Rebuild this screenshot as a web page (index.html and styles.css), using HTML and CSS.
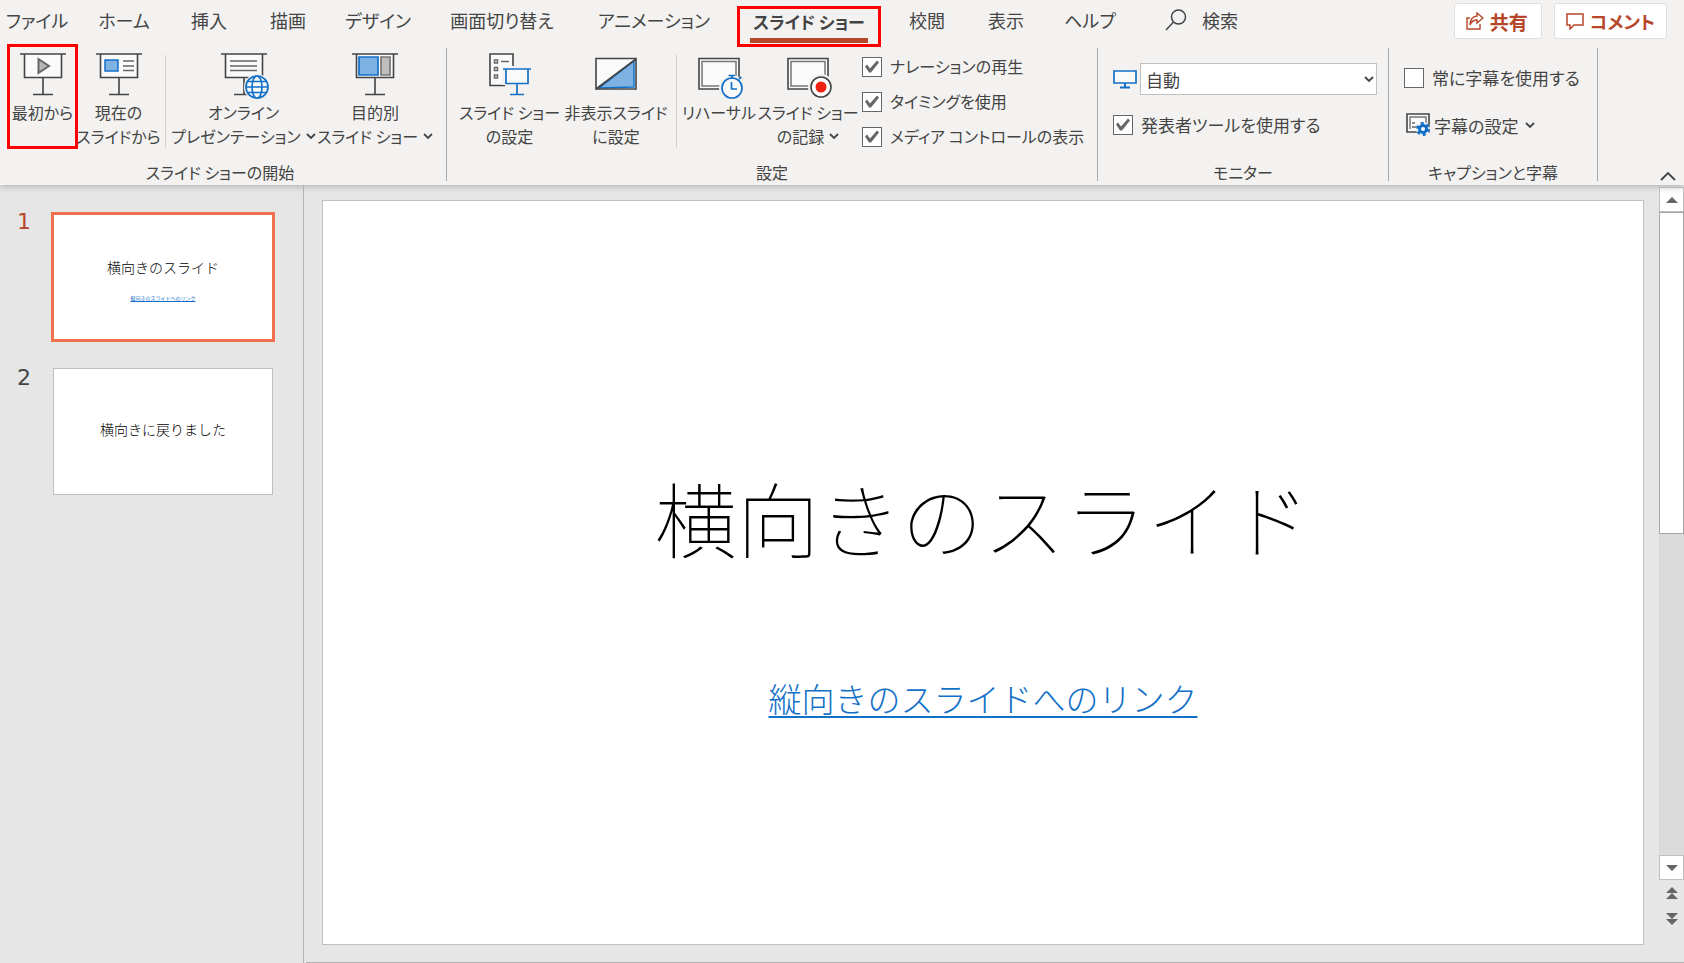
FILE: index.html
```html
<!DOCTYPE html>
<html lang="ja">
<head>
<meta charset="utf-8">
<title>スライド ショー</title>
<link rel="stylesheet" href="styles.css">
</head>
<body>
<svg class="defs" aria-hidden="true">
  <symbol id="easel" viewBox="0 0 50 48"><path d="M6.500 2V25.500H43.500V2" fill="#fafafa" stroke="#444" stroke-width="1.600"/><path d="M2 2H48M25 26V42M15 42.500H35" fill="none" stroke="#444" stroke-width="1.600"/></symbol>
  <symbol id="chev" viewBox="0 0 10 8"><path d="M1 2L5 6L9 2" fill="none" stroke="#444" stroke-width="1.800"/></symbol>
</svg>
<header class="ribbon">
  <div class="topbar">
    <nav class="tabs">
      <button class="tab">ファイル</button><button class="tab">ホーム</button><button class="tab">挿入</button><button class="tab">描画</button><button class="tab">デザイン</button><button class="tab">画面切り替え</button><button class="tab">アニメーション</button><button class="tab active"><span>スライド ショー</span></button><button class="tab">校閲</button><button class="tab">表示</button><button class="tab">ヘルプ</button>
    </nav>
    <button class="search"><svg width="22" height="22" viewBox="0 0 22 22" fill="none" stroke="#444" stroke-width="1.500"><circle cx="13.500" cy="8" r="7"/><path d="M8.500 13L1 21"/></svg>検索</button>
    <div class="actions">
      <button class="action"><svg width="18" height="18" viewBox="0 0 18 18" fill="none" stroke="#b7472a" stroke-width="1.400"><path d="M4 6H1V17H14V12M11 1L17 6L11 11V8Q6 8 4 13Q4 5 11 4Z"/></svg>共有</button>
      <button class="action"><svg width="18" height="18" viewBox="0 0 18 18" fill="none" stroke="#b7472a" stroke-width="1.500"><path d="M1 2H17V13H8L4 17V13H1Z"/></svg>コメント</button>
    </div>
  </div>
  <div class="groups">
    <section class="group start">
      <div class="tools">
        <button class="tool marked"><svg class="icon"><use href="#easel"/><path d="M20.500 7V21L31 14Z" fill="#b8b6b5" stroke="#666" stroke-width="2"/></svg><span>最初から</span></button>
        <button class="tool"><svg class="icon"><use href="#easel"/><path d="M11 8H24V19H11Z" fill="#7db2e3" stroke="#1370c7" stroke-width="1.500"/><path d="M29 9H40M29 14H40M29 18.500H40" stroke="#666" stroke-width="1.500"/></svg><span>現在の</span><span>スライドから</span></button>
        <i class="rule"></i>
        <button class="tool"><svg class="icon"><use href="#easel"/><path d="M11 9H38M11 14H38M11 18.500H38" stroke="#666" stroke-width="1.500"/><circle cx="38" cy="35" r="13" fill="#f3f2f1"/><g fill="#fafafa" stroke="#1370c7" stroke-width="1.700"><circle cx="38" cy="35" r="11"/><ellipse cx="38" cy="35" rx="5" ry="11"/><path d="M27 35H49M29 29.500H47M29 40.500H47"/></g></svg><span>オンライン</span><span class="line">プレゼンテーション<svg class="chev"><use href="#chev"/></svg></span></button>
        <button class="tool"><svg class="icon"><use href="#easel"/><path d="M9 5H28V23H9Z" fill="#7db2e3" stroke="#1370c7" stroke-width="1.700"/><path d="M31 5H40V23H31Z" fill="#c0bfbe" stroke="#777" stroke-width="1.700"/></svg><span>目的別</span><span class="line">スライド ショー<svg class="chev"><use href="#chev"/></svg></span></button>
      </div>
      <h2>スライド ショーの開始</h2>
    </section>
    <section class="group setup">
      <div class="tools">
        <button class="tool"><svg class="icon"><path d="M20 33.500H5V2H28V14" fill="#fafafa" stroke="#444" stroke-width="1.600"/><path d="M9.500 8H12.500V11H9.500ZM9.500 15.500H12.500V18.500H9.500ZM9.500 23H12.500V26H9.500ZM16 9.500H24" fill="none" stroke="#666" stroke-width="1.500"/><path d="M17 15H48V33H17Z" fill="#f3f2f1"/><path d="M21 17H43V31.500H21Z" fill="#fafafa"/><path d="M18 17H46M21 17V31.500H43V17M32 32V42M25 42.500H39" fill="none" stroke="#1370c7" stroke-width="1.700"/></svg><span>スライド ショー</span><span>の設定</span></button>
        <button class="tool"><svg class="icon"><path d="M5 6.500H45V37H5Z" fill="#fafafa"/><path d="M8 36L43 9V35Z" fill="#7db2e3" stroke="#1370c7" stroke-width="1.500"/><path d="M5 6.500H45V37H5Z" fill="none" stroke="#444" stroke-width="1.600"/><path d="M5 37L45 7" stroke="#444" stroke-width="1.600"/></svg><span>非表示スライド</span><span>に設定</span></button>
        <i class="rule"></i>
        <button class="tool"><svg class="icon"><path d="M5 6.500H45V37H5Z" fill="#fafafa" stroke="#444" stroke-width="1.600"/><path d="M8 9.500H42V34H8Z" fill="none" stroke="#777" stroke-width="1.500"/><circle cx="38" cy="36" r="13" fill="#f3f2f1"/><g fill="none" stroke="#1370c7" stroke-width="1.700"><circle cx="38" cy="36" r="10" fill="#fafafa"/><path d="M37.500 30V37H43M34.500 23.500H41M38 24V27M45 27L47.500 25"/></g></svg><span>リハーサル</span></button>
        <button class="tool"><svg class="icon"><path d="M5 6.500H45V37H5Z" fill="#fafafa" stroke="#444" stroke-width="1.600"/><path d="M8 9.500H42V34H8Z" fill="none" stroke="#777" stroke-width="1.500"/><circle cx="38" cy="35" r="13" fill="#f3f2f1"/><circle cx="38" cy="35" r="10" fill="#fff" stroke="#444" stroke-width="1.600"/><circle cx="38" cy="35" r="5.500" fill="#f0220f"/></svg><span>スライド ショー</span><span class="line">の記録<svg class="chev"><use href="#chev"/></svg></span></button>
        <div class="checks">
          <label class="check"><input type="checkbox" checked>ナレーションの再生</label>
          <label class="check"><input type="checkbox" checked>タイミングを使用</label>
          <label class="check"><input type="checkbox" checked>メディア コントロールの表示</label>
        </div>
      </div>
      <h2>設定</h2>
    </section>
    <section class="group monitor">
      <div class="rows">
        <div class="pick"><label for="mon" aria-label="モニター"><svg width="24" height="20" viewBox="0 0 24 20"><path d="M1 2H23V14H1Z" fill="#fafafa" stroke="#1370c7" stroke-width="1.700"/><path d="M12 14V18M7 18.500H17" stroke="#1370c7" stroke-width="2"/></svg></label>
          <div class="combo"><select id="mon"><option>自動</option></select><svg class="chev"><use href="#chev"/></svg></div></div>
        <label class="check"><input type="checkbox" checked>発表者ツールを使用する</label>
      </div>
      <h2>モニター</h2>
    </section>
    <section class="group captions">
      <div class="rows">
        <label class="check"><input type="checkbox">常に字幕を使用する</label>
        <button class="inline"><svg width="25" height="24" viewBox="0 0 25 24"><path d="M1 1H23V19H1Z" fill="#fafafa" stroke="#444" stroke-width="1.600"/><path d="M4 16V4H20V10" fill="none" stroke="#777" stroke-width="1.500"/><path d="M6 10H9M6 14H11" stroke="#666" stroke-width="1.500"/><circle cx="17" cy="16" r="7" fill="#f3f2f1"/><circle cx="17" cy="16" r="3.500" fill="#fff" stroke="#1370c7" stroke-width="3"/><circle cx="17" cy="16" r="5.500" fill="none" stroke="#1370c7" stroke-width="3" stroke-dasharray="2.900 2.860"/></svg><span>字幕の設定</span><svg class="chev"><use href="#chev"/></svg></button>
      </div>
      <h2>キャプションと字幕</h2>
    </section>
    <button class="collapse" aria-label="リボンを折りたたむ"><svg width="16" height="10" viewBox="0 0 16 10"><path d="M1 9L8 2L15 9" fill="none" stroke="#444" stroke-width="1.800"/></svg></button>
  </div>
</header>
<main class="work">
  <aside class="pane">
    <div class="entry current"><b>1</b><button class="thumb"><span>横向きのスライド</span><u>縦向きのスライドへのリンク</u></button></div>
    <div class="entry"><b>2</b><button class="thumb second"><span>横向きに戻りました</span></button></div>
  </aside>
  <div class="stage">
    <article class="slide"><h1>横向きのスライド</h1><a href="#">縦向きのスライドへのリンク</a></article>
    <div class="scroll">
      <button class="arrow" aria-label="上へ"><svg width="12" height="6"><path d="M0 6L6 0L12 6Z"/></svg></button>
      <div class="track"><div class="grip"></div></div>
      <button class="arrow" aria-label="下へ"><svg width="12" height="6"><path d="M0 0L6 6L12 0Z"/></svg></button>
      <button class="jump" aria-label="前のスライド"><svg width="12" height="12"><path d="M0 6L6 0L12 6ZM0 12L6 6L12 12Z"/></svg></button>
      <button class="jump" aria-label="次のスライド"><svg width="12" height="12"><path d="M0 0L6 6L12 0ZM0 6L6 12L12 6Z"/></svg></button>
    </div>
  </div>
</main>
</body>
</html>
```
FILE: styles.css
```css
*, *::before, *::after { box-sizing: border-box; }
body {
  margin: 0;
  min-height: 100vh;
  display: flex;
  flex-direction: column;
  background: #e6e6e6;
  color: #444;
  font: 400 16px/23px "Noto Sans CJK JP", sans-serif;
}
.ribbon, .ribbon button, .ribbon select { font-feature-settings: "palt"; }
button, select {
  font: inherit;
  color: inherit;
  border: 0;
  padding: 0;
  background: none;
  white-space: nowrap;
}
svg { display: block; flex: none; }
h1, h2 { margin: 0; font-weight: inherit; }
.defs { position: absolute; width: 0; height: 0; }
.ribbon {
  position: relative;
  background: #f3f2f1;
  box-shadow: 0 1px 7px #aaa;
  padding-bottom: 4px;
}
.topbar { display: flex; height: 48px; align-items: flex-start; }
.tabs {
  display: grid;
  grid-template-columns: 74px 100px 70px 88px 92px 156px 148px 162px 74px 84px 84px;
}
.tab, .search { height: 40px; font-size: 18px; }
.tab.active {
  justify-self: center;
  width: 144px;
  height: 41px;
  margin-top: 6px;
  border: 3px solid #f00;
  font-size: 17px;
  font-weight: 700;
}
.tab.active span {
  display: block;
  width: 118px;
  height: 33px;
  margin: 0 auto;
  border-bottom: 5px solid #b7472a;
  line-height: 24px;
}
.search { display: flex; align-items: center; gap: 15px; margin-left: 33px; }
.actions { display: flex; gap: 12px; margin: 3px 17px 0 auto; }
.action {
  display: flex;
  align-items: center;
  gap: 6px;
  height: 36px;
  padding: 0 13px 0 11px;
  border: 1px solid #e1dfdd;
  border-radius: 3px;
  background: #fff;
  color: #b7472a;
  font-size: 19px;
  font-weight: 700;
}
.action:last-child { padding-right: 11px; font-size: 18px; }
.groups { display: flex; height: 133px; }
.group {
  display: flex;
  flex-direction: column;
  justify-content: space-between;
  border-right: 1px solid #a8a8a8;
}
.group h2 { font-size: 16px; line-height: 18px; text-align: center; }
.start { width: 447px; }
.setup { width: 651px; }
.monitor { width: 291px; }
.captions { width: 209px; }
.tools { display: grid; }
.start .tools { grid-template-columns: 71px 81px 12px 145px 118px; padding-left: 7px; }
.setup .tools { grid-template-columns: 101px 112px 8px 78px 100px auto; padding-left: 12px; justify-content: start; }
.start h2 { padding-right: 6px; }
.tool {
  display: flex;
  flex-direction: column;
  align-items: center;
  padding-top: 4px;
  line-height: 24px;
}
.marked { position: relative; }
.marked::after {
  content: "";
  position: absolute;
  inset: -4px 0 auto;
  height: 105px;
  border: 3px solid #f00;
}
.icon { width: 50px; height: 48px; overflow: visible; }
.chev { width: 10px; height: 8px; }
.line { display: flex; align-items: center; gap: 5px; }
.rule { width: 1px; height: 93px; margin: 7px auto 0; background: #d2d0ce; }
.checks { display: flex; flex-direction: column; gap: 12px; padding: 7px 0 0 4px; }
.check { display: flex; align-items: center; gap: 8px; white-space: nowrap; }
.check input {
  appearance: none;
  flex: none;
  width: 20px;
  height: 20px;
  margin: 0;
  border: 1px solid #666;
  background: #fff;
}
.check input:checked::before {
  content: "";
  display: block;
  width: 18px;
  height: 18px;
  background: #666;
  clip-path: polygon(2px 9px, 4px 7px, 7px 11px, 14px 3px, 16px 5px, 8px 15px, 6px 15px);
}
.rows { display: flex; flex-direction: column; align-items: flex-start; gap: 18px; padding: 15px 11px 0 15px; }
.rows .check, .inline, .combo select { font-size: 17px; }
.pick { display: flex; align-items: center; gap: 3px; align-self: stretch; }
.combo { position: relative; flex: 1; }
.combo select {
  display: block;
  width: 100%;
  height: 32px;
  appearance: none;
  padding: 0 5px;
  border: 1px solid #c0c0c0;
  background: #fff;
}
.combo .chev { position: absolute; right: 3px; top: 12px; }
.captions .rows { gap: 24px; padding-top: 18px; }
.inline { display: flex; align-items: center; gap: 3px; padding-left: 2px; }
.inline .chev { margin-left: 4px; }
.checks .check { height: 23px; }
.collapse { align-self: flex-end; margin: 0 8px 0 auto; }
.work { flex: 1; display: flex; min-height: 0; }
.pane {
  width: 304px;
  padding: 27px 28px 0 16px;
  border-right: 1px solid #b3b3b3;
}
.entry {
  display: grid;
  grid-template-columns: 16px 1fr;
  gap: 19px;
  margin-bottom: 26px;
  align-items: start;
}
.entry b { font: 400 22px/20px "DejaVu Sans", sans-serif; text-align: center; }
.current b { color: #b7472a; }
.thumb {
  height: 130px;
  padding: 39px 0 0;
  border: 3px solid #f07050;
  background: #fff;
  color: #000;
  font-size: 14px;
  font-weight: 300;
  line-height: 26px;
  display: flex;
  flex-direction: column;
  align-items: center;
}
.thumb u { margin-top: 12px; color: #1370c7; font-size: 5px; font-weight: 400; line-height: 12px; }
.second { height: 127px; margin: 0 2px; padding-top: 47px; border: 1px solid #c0c0c0; }
.stage {
  flex: 1;
  display: flex;
  gap: 15px;
  margin-left: 2px;
  padding: 0 0 0 16px;
  border-bottom: 1px solid #b3b3b3;
}
.slide {
  flex: 1;
  margin: 15px 0 17px;
  border: 1px solid #c0c0c0;
  background: #fff;
  display: flex;
  flex-direction: column;
  align-items: center;
  padding-top: 256px;
}
.slide h1 { color: #000; font-size: 82px; font-weight: 100; line-height: 120px; }
.slide a {
  margin-top: 100px;
  color: #1370c7;
  font-size: 33px;
  font-weight: 300;
  line-height: 42px;
  text-decoration-thickness: 2px;
  text-underline-offset: 4px;
}
.scroll { width: 25px; display: flex; flex-direction: column; padding: 2px 0 30px; }
.scroll button { display: grid; place-items: center; }
.scroll svg { fill: #666; }
.arrow { height: 25px; border: 1px solid #c0c0c0; background: #fff; }
.track { flex: 1; background: #dbdbdb; }
.grip { height: 50%; border: 1px solid #a6a6a6; background: #fff; }
.jump { height: 26px; }
```
